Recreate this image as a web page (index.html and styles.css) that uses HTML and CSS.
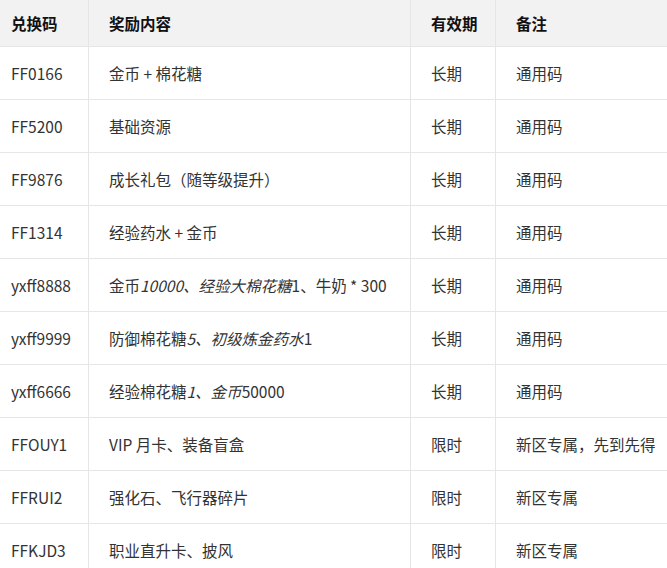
FILE: index.html
```html
<!DOCTYPE html>
<html lang="zh">
<head>
<meta charset="utf-8">
<link rel="stylesheet" href="styles.css">
</head>
<body>
<table class="codes">
  <thead>
    <tr><th class="c1">兑换码</th><th class="c2">奖励内容</th><th class="c3">有效期</th><th class="c4">备注</th></tr>
  </thead>
  <tbody>
    <tr><td class="c1">FF0166</td><td class="c2">金币 + 棉花糖</td><td class="c3">长期</td><td class="c4">通用码</td></tr>
    <tr><td class="c1">FF5200</td><td class="c2">基础资源</td><td class="c3">长期</td><td class="c4">通用码</td></tr>
    <tr><td class="c1">FF9876</td><td class="c2">成长礼包（随等级提升）</td><td class="c3">长期</td><td class="c4">通用码</td></tr>
    <tr><td class="c1">FF1314</td><td class="c2">经验药水 + 金币</td><td class="c3">长期</td><td class="c4">通用码</td></tr>
    <tr><td class="c1">yxff8888</td><td class="c2">金币<em>10000、经验大棉花糖</em>1、牛奶 * 300</td><td class="c3">长期</td><td class="c4">通用码</td></tr>
    <tr><td class="c1">yxff9999</td><td class="c2">防御棉花糖<em>5、初级炼金药水</em>1</td><td class="c3">长期</td><td class="c4">通用码</td></tr>
    <tr><td class="c1">yxff6666</td><td class="c2">经验棉花糖<em>1、金币</em>50000</td><td class="c3">长期</td><td class="c4">通用码</td></tr>
    <tr><td class="c1">FFOUY1</td><td class="c2">VIP 月卡、装备盲盒</td><td class="c3">限时</td><td class="c4">新区专属，先到先得</td></tr>
    <tr><td class="c1">FFRUI2</td><td class="c2">强化石、飞行器碎片</td><td class="c3">限时</td><td class="c4">新区专属</td></tr>
    <tr><td class="c1">FFKJD3</td><td class="c2">职业直升卡、披风</td><td class="c3">限时</td><td class="c4">新区专属</td></tr>
  </tbody>
</table>
</body>
</html>
```
FILE: styles.css
```css
html, body {
  margin: 0;
  padding: 0;
  background: #fff;
}
body {
  font-family: "Noto Sans CJK SC", "Noto Sans", sans-serif;
  font-size: 15.5px;
  color: #333;
}
.codes {
  border-collapse: collapse;
  table-layout: fixed;
  width: 700px;
}
.codes th, .codes td {
  text-align: left;
  vertical-align: middle;
  padding: 0 0 0 20px;
  border-bottom: 1px solid #e6e6e6;
  border-right: 1px solid #e6e6e6;
  white-space: nowrap;
  line-height: 20px;
}
.codes th {
  height: 46px;
  background: #f2f2f2;
  color: #111;
  font-weight: bold;
}
.codes td {
  height: 52px;
}
.codes .c1 { width: 77px; padding-left: 11px; }
.codes .c2 { width: 301px; }
.codes .c3 { width: 64px; }
.codes .c4 { border-right: none; }
.codes em {
  font-style: italic;
}
```
